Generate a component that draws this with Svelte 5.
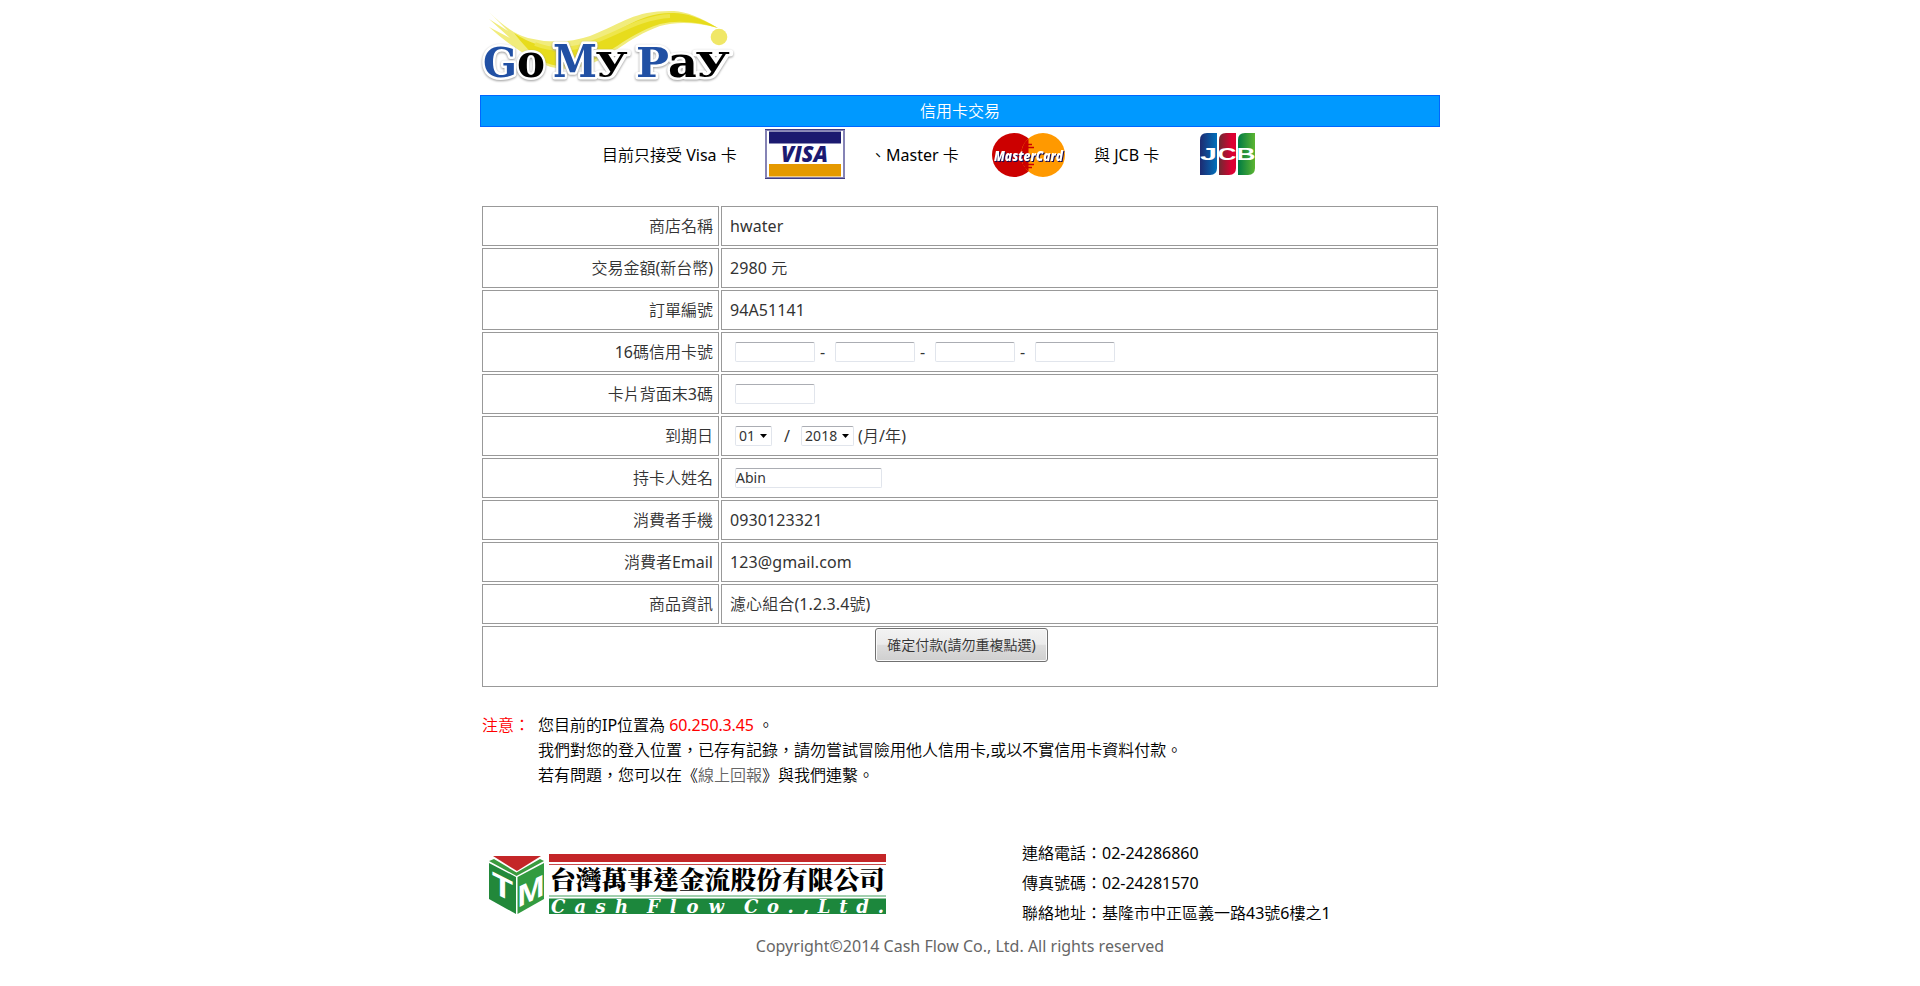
<script>
  const rows = [
    { label: '商店名稱', kind: 'text', value: 'hwater' },
    { label: '交易金額(新台幣)', kind: 'text', value: '2980 元' },
    { label: '訂單編號', kind: 'text', value: '94A51141' },
    { label: '16碼信用卡號', kind: 'card' },
    { label: '卡片背面末3碼', kind: 'cvc' },
    { label: '到期日', kind: 'expiry' },
    { label: '持卡人姓名', kind: 'name' },
    { label: '消費者手機', kind: 'text', value: '0930123321' },
    { label: '消費者Email', kind: 'text', value: '123@gmail.com' },
    { label: '商品資訊', kind: 'text', value: '濾心組合(1.2.3.4號)' }
  ];
  let holder = $state('Abin');
</script>

<div class="page" lang="zh-TW">
  <header>
    <svg class="logo" width="270" height="95" viewBox="0 0 270 95">
      <path d="M9 12 Q30 33 48 38 Q80 46 110 36 C145 22 155 10 194 11 Q212 12 238 28 Q205 19 180 26 C145 39 135 55 110 64 Q80 75 57 61 Q32 48 9 27 L30 38 L9 19 L28 31Z" fill="#f1ec7c" />
      <path d="M34 33 Q65 54 100 46 C140 36 155 12 194 13 Q212 13 238 28 Q205 18 180 24 C143 36 130 56 105 63 Q80 71 60 60 Q48 51 34 33Z" fill="#e7dc1c" />
      <path d="M55 44 C105 64 142 18 190 16" fill="none" stroke="#eee64b" stroke-width="4" />
      <circle cx="239" cy="37" r="8.3" fill="#f0e767" />
      <g class="letters">
        <text class="blue" x="3" y="77" font-size="41" textLength="34" lengthAdjust="spacingAndGlyphs">G</text>
        <text x="37" y="77" font-size="46" textLength="28" lengthAdjust="spacingAndGlyphs">o</text>
        <text class="blue" x="73" y="77" font-size="45" textLength="44" lengthAdjust="spacingAndGlyphs">M</text>
        <text x="117" y="70" font-size="34" textLength="29" lengthAdjust="spacingAndGlyphs">y</text>
        <text class="blue" x="156" y="77" font-size="41" textLength="33" lengthAdjust="spacingAndGlyphs">P</text>
        <text x="188" y="77" font-size="43" textLength="30" lengthAdjust="spacingAndGlyphs">a</text>
        <text x="217" y="70" font-size="34" textLength="31" lengthAdjust="spacingAndGlyphs">y</text>
      </g>
    </svg>
    <h1>信用卡交易</h1>
  </header>

  <div class="cards">
    <span class="c1">目前只接受 Visa 卡</span>
    <svg width="80" height="50" viewBox="0 0 80 50">
      <rect x="1" y="1" width="78" height="48" fill="#fff" stroke="#8583b5" stroke-width="2" />
      <path d="M0 .5H80M0 49.5H80" stroke="#403d83" />
      <rect x="4" y="2.5" width="72" height="12" fill="#1b1a70" />
      <rect x="4" y="35" width="72" height="12.5" fill="#e59900" />
      <text x="16" y="33" font-size="23" font-style="italic" font-weight="900" fill="#1b1a70" textLength="47" lengthAdjust="spacingAndGlyphs" font-family="Open Sans, sans-serif">VISA</text>
    </svg>
    <span class="c2">、Master 卡</span>
    <svg width="74" height="44" viewBox="0 0 74 44">
      <circle cx="22" cy="22" r="22" fill="#c00" />
      <circle cx="51" cy="22" r="22" fill="#f90" />
      <path d="M36.5 5.5A22 22 0 0 0 36.5 38.5Z" fill="#c00" />
      <path d="M32 11.5H40M31 14.5H42M31 31.5H42M32 34.5H40" stroke="#c00" stroke-width="1.5" />
      <text class="mc" x="2" y="27.5" font-size="14" textLength="69" lengthAdjust="spacingAndGlyphs">MasterCard</text>
    </svg>
    <span class="c3">與 JCB 卡</span>
    <svg width="56" height="42" viewBox="0 0 56 42">
      <defs>
        <linearGradient id="jb"><stop stop-color="#1e2a70" /><stop offset="1" stop-color="#0070bb" /></linearGradient>
        <linearGradient id="jr"><stop stop-color="#6c2a32" /><stop offset=".75" stop-color="#dc0032" /></linearGradient>
        <linearGradient id="jg"><stop stop-color="#007b43" /><stop offset="1" stop-color="#5cb531" /></linearGradient>
      </defs>
      <path d="M7 0H17V35Q17 42 10 42H0V7Q0 0 7 0Z" fill="url(#jb)" />
      <path d="M26 0H36V35Q36 42 29 42H19V7Q19 0 26 0Z" fill="url(#jr)" />
      <path d="M45 0H55V35Q55 42 48 42H38V7Q38 0 45 0Z" fill="url(#jg)" />
      <g fill="#fff" font-weight="700" font-size="17" font-family="Liberation Sans, sans-serif">
        <text x="0" y="27" textLength="17" lengthAdjust="spacingAndGlyphs">J</text>
        <text x="17.500" y="27" textLength="19" lengthAdjust="spacingAndGlyphs">C</text>
        <text x="36.500" y="27" textLength="19" lengthAdjust="spacingAndGlyphs">B</text>
      </g>
    </svg>
  </div>

  <div class="form">
    {#each rows as row}
      <div class="row">
        <div class="cell label">{row.label}</div>
        <div class="cell value">
          {#if row.kind === 'text'}
            {row.value}
          {:else if row.kind === 'card'}
            <input class="short" /><i>-</i><input class="short" /><i>-</i><input class="short" /><i>-</i><input class="short" />
          {:else if row.kind === 'cvc'}
            <input class="short" />
          {:else if row.kind === 'expiry'}
            <span class="select month">01<svg width="7" height="4" viewBox="0 0 7 4"><path d="M0 0H7L3.5 4Z" /></svg></span>
            <span class="slash">/</span>
            <span class="select year">2018<svg width="7" height="4" viewBox="0 0 7 4"><path d="M0 0H7L3.5 4Z" /></svg></span>
            <span class="unit">(月/年)</span>
          {:else}
            <input class="name" bind:value={holder} />
          {/if}
        </div>
      </div>
    {/each}
    <div class="cell submit"><button>確定付款(請勿重複點選)</button></div>
  </div>

  <div class="notes">
    <span class="red">注意：</span>
    <div>
      <p>您目前的IP位置為 <span class="red ip">60.250.3.45</span> 。</p>
      <p>我們對您的登入位置，已存有記錄，請勿嘗試冒險用他人信用卡,或以不實信用卡資料付款。</p>
      <p>若有問題，您可以在《<a href="#report">線上回報</a>》與我們連繫。</p>
    </div>
  </div>

  <footer>
    <svg width="398" height="62" viewBox="0 0 398 62">
      <path d="M4 2H52L28 17Z" fill="#c42628" />
      <path d="M0 7L5 5L27.5 18.500L51 5L55 7L27.500 22Z" fill="#3b9b3e" />
      <path d="M0 9L27 23V60L0 45Z" fill="#22883a" />
      <path d="M55 9L28.500 23V60L55 45Z" fill="#329b40" />
      <g fill="#fff" font-family="Liberation Sans, sans-serif" font-weight="700">
        <text transform="matrix(1 .5 0 1 3 38)" font-size="30" textLength="21" lengthAdjust="spacingAndGlyphs" y="0">T</text>
        <text transform="matrix(1 -.5 0 1 28.500 54)" font-size="30" textLength="27" lengthAdjust="spacingAndGlyphs" y="0">M</text>
      </g>
      <path d="M60 0H397V8H60Z" fill="#c42628" />
      <path d="M60 10.500H397" stroke="#c94a4b" />
      <text x="61" y="35" font-size="25.500" font-weight="900" fill="#000" textLength="335" lengthAdjust="spacingAndGlyphs" font-family="Noto Serif CJK TC, Noto Sans CJK TC, sans-serif">台灣萬事達金流股份有限公司</text>
      <path d="M60 42H397" stroke="#45a05f" />
      <path d="M60 44.500H397V60H60Z" fill="#1c873c" />
      <g class="script">
        <text x="62" y="58.500" textLength="77" lengthAdjust="spacing">Cash</text>
        <text x="158" y="58.500" textLength="77" lengthAdjust="spacing">Flow</text>
        <text x="255" y="58.500" textLength="140" lengthAdjust="spacing">Co.,Ltd.</text>
      </g>
    </svg>
    <div class="contact">
      <p>連絡電話：02-24286860</p>
      <p>傳真號碼：02-24281570</p>
      <p>聯絡地址：基隆市中正區義一路43號6樓之1</p>
    </div>
  </footer>
  <div class="copyright">Copyright©2014 Cash Flow Co., Ltd. All rights reserved</div>
</div>

<style>
  :global(body) { background: #fff; }
  .page {
    width: 960px;
    height: 986px;
    margin: 0 auto;
    overflow: hidden;
    font: 400 16px/25px "Noto Sans", "Noto Sans CJK TC DemiLight", "Noto Sans CJK TC", sans-serif;
    color: #000;
  }
  svg { display: block; flex: none; }
  p { margin: 0; white-space: nowrap; }
  .letters {
    font-family: "DejaVu Serif", serif;
    font-weight: 700;
    fill: #000;
    stroke: #fff;
    stroke-width: 5px;
    stroke-linejoin: round;
    paint-order: stroke;
    filter: drop-shadow(0 1px 1px #999);
  }
  .letters .blue { fill: #2150a4; }
  .mc {
    fill: #fff;
    font-family: "Open Sans", sans-serif;
    font-style: italic;
    font-weight: 800;
    filter: drop-shadow(1px 1px 0 #170b51);
  }
  .script {
    fill: #fff;
    font: italic 700 18px "DejaVu Serif", serif;
  }
  h1 {
    box-sizing: border-box;
    height: 32px;
    margin: 0;
    border: 1px solid #0066ff;
    background: #0099ff;
    color: #fff;
    font-size: 16px;
    font-weight: inherit;
    line-height: 31px;
    text-align: center;
  }
  .cards { display: flex; height: 77px; padding: 2px 0 0 122px; box-sizing: border-box; line-height: 52px; white-space: nowrap; }
  .cards svg:nth-of-type(2), .cards svg:nth-of-type(3) { margin-top: 4px; }
  .c1 { width: 163px; }
  .c2 { width: 122px; padding-left: 25px; }
  .c3 { width: 106px; padding-left: 28px; }
  .form { display: flex; flex-direction: column; gap: 2px; padding: 2px; color: #333; }
  .row { display: grid; grid-template-columns: 237px 717px; gap: 2px; }
  .cell { box-sizing: border-box; height: 40px; border: 1px solid #999; line-height: 39px; white-space: nowrap; }
  .label { padding-right: 5px; text-align: right; }
  .value { display: flex; align-items: center; padding-left: 8px; letter-spacing: .1px; }
  input, .select {
    box-sizing: border-box;
    height: 20px;
    margin: 0 0 0 5px;
    padding: 0 1px;
    border: 1px solid #e1e5ec;
    border-top-color: #abadb3;
    border-radius: 2px;
    background: #fff;
    color: #333;
    font: 14px/20px "Noto Sans", sans-serif;
  }
  .short { width: 80px; }
  .name { width: 147px; padding: 0; }
  i { width: 15px; padding-left: 5px; box-sizing: border-box; font-style: normal; }
  .short + i + .short { margin-left: 5px; }
  .select { display: flex; align-items: center; justify-content: space-between; padding: 0 4px 0 3px; }
  .month { width: 37px; }
  .year { width: 53px; margin: 0; }
  .slash { width: 17px; margin-left: 12px; }
  .unit { margin-left: 4px; }
  .submit { height: 61px; padding-top: 1px; text-align: center; }
  button {
    display: block;
    box-sizing: border-box;
    width: 173px;
    height: 34px;
    margin: 0 0 0 392px;
    padding: 0 0 1px;
    border: 1px solid #707070;
    border-radius: 3px;
    background: linear-gradient(#f2f2f2, #ebebeb 48%, #dddddd 50%, #cfcfcf);
    box-shadow: inset 0 0 0 1px #fafafa;
    color: #333;
    font: inherit;
    font-size: 14px;
    line-height: 30px;
  }
  .notes { display: flex; height: 128px; padding: 24px 2px 0; }
  .notes > .red { width: 56px; }
  .red { color: #f00; }
  .ip { letter-spacing: -.15px; }
  a { color: #666; text-decoration: none; }
  footer { display: flex; height: 91px; padding-left: 9px; line-height: 30px; }
  footer svg { margin-top: 13px; }
  .contact { margin: -3px 0 0 135px; }
  .copyright { color: #666; text-align: center; line-height: 28px; }
</style>
